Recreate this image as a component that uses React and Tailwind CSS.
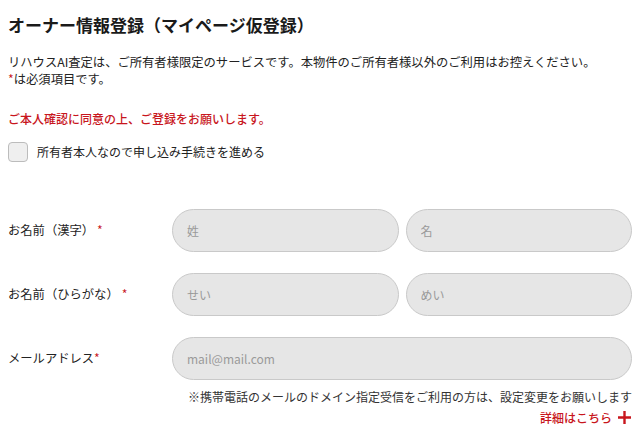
import React from 'react';

const jp = { fontFamily: '"Noto Sans CJK JP", "Noto Sans", sans-serif' };

const Req = () => <span className="ml-[3px] text-[#c8161d]">*</span>;

const Field = ({ placeholder }) => (
  <input
    type="text"
    placeholder={placeholder}
    className="min-w-0 flex-1 h-[43px] rounded-full bg-[#e6e6e6] border border-[#c9c9c9] pl-[14px] text-[12px] text-[#333] placeholder:text-[#9a9a9a] outline-none"
    style={jp}
  />
);

const Row = ({ label, children }) => (
  <div className="flex items-center">
    <div className="w-[164px] shrink-0 text-[12.3px] text-[#222]">{label}</div>
    <div className="flex flex-1 gap-[7px]">{children}</div>
  </div>
);

export default function App() {
  return (
    <div className="w-[640px] h-[440px] bg-white px-2 pt-[13px] text-[#222] overflow-hidden" style={jp}>
      <h1 className="text-[17px] font-bold leading-[24px] text-[#1a1a1a]">
        オーナー情報登録（マイページ仮登録）
      </h1>

      <p className="mt-[17px] text-[12.3px] leading-[17px] text-[#222]">
        リハウスAI査定は、ご所有者様限定のサービスです。本物件のご所有者様以外のご利用はお控えください。
        <br />
        <span className="text-[#c8161d]">*</span>は必須項目です。
      </p>

      <p className="mt-[22px] text-[12px] leading-[17px] font-medium text-[#c8161d]">
        ご本人確認に同意の上、ご登録をお願いします。
      </p>

      <label className="mt-[15px] flex items-center gap-[9px]">
        <span className="w-5 h-5 rounded-[4px] bg-[#efefef] border border-[#bcbcbc]" />
        <span className="text-[12px] text-[#222]">所有者本人なので申し込み手続きを進める</span>
      </label>

      <div className="mt-[47px] flex flex-col gap-[21px]">
        <Row label={<>お名前（漢字）<Req /></>}>
          <Field placeholder="姓" />
          <Field placeholder="名" />
        </Row>
        <Row label={<>お名前（ひらがな）<Req /></>}>
          <Field placeholder="せい" />
          <Field placeholder="めい" />
        </Row>
        <Row label={<>メールアドレス<span className="text-[#c8161d]">*</span></>}>
          <Field placeholder="mail@mail.com" />
        </Row>
      </div>

      <p className="mt-[8px] text-right text-[12px] leading-[17px] text-[#333]">
        ※携帯電話のメールのドメイン指定受信をご利用の方は、設定変更をお願いします
      </p>
      <div className="mt-[4px] flex items-center justify-end gap-[5px] text-[12px] leading-[17px] font-medium text-[#c8161d]">
        <span>詳細はこちら</span>
        <svg width="15" height="15" viewBox="0 0 15 15" className="text-[#c8161d]">
          <path d="M7.5 1v13M1 7.5h13" stroke="currentColor" strokeWidth="2.4" fill="none" />
        </svg>
      </div>
    </div>
  );
}
